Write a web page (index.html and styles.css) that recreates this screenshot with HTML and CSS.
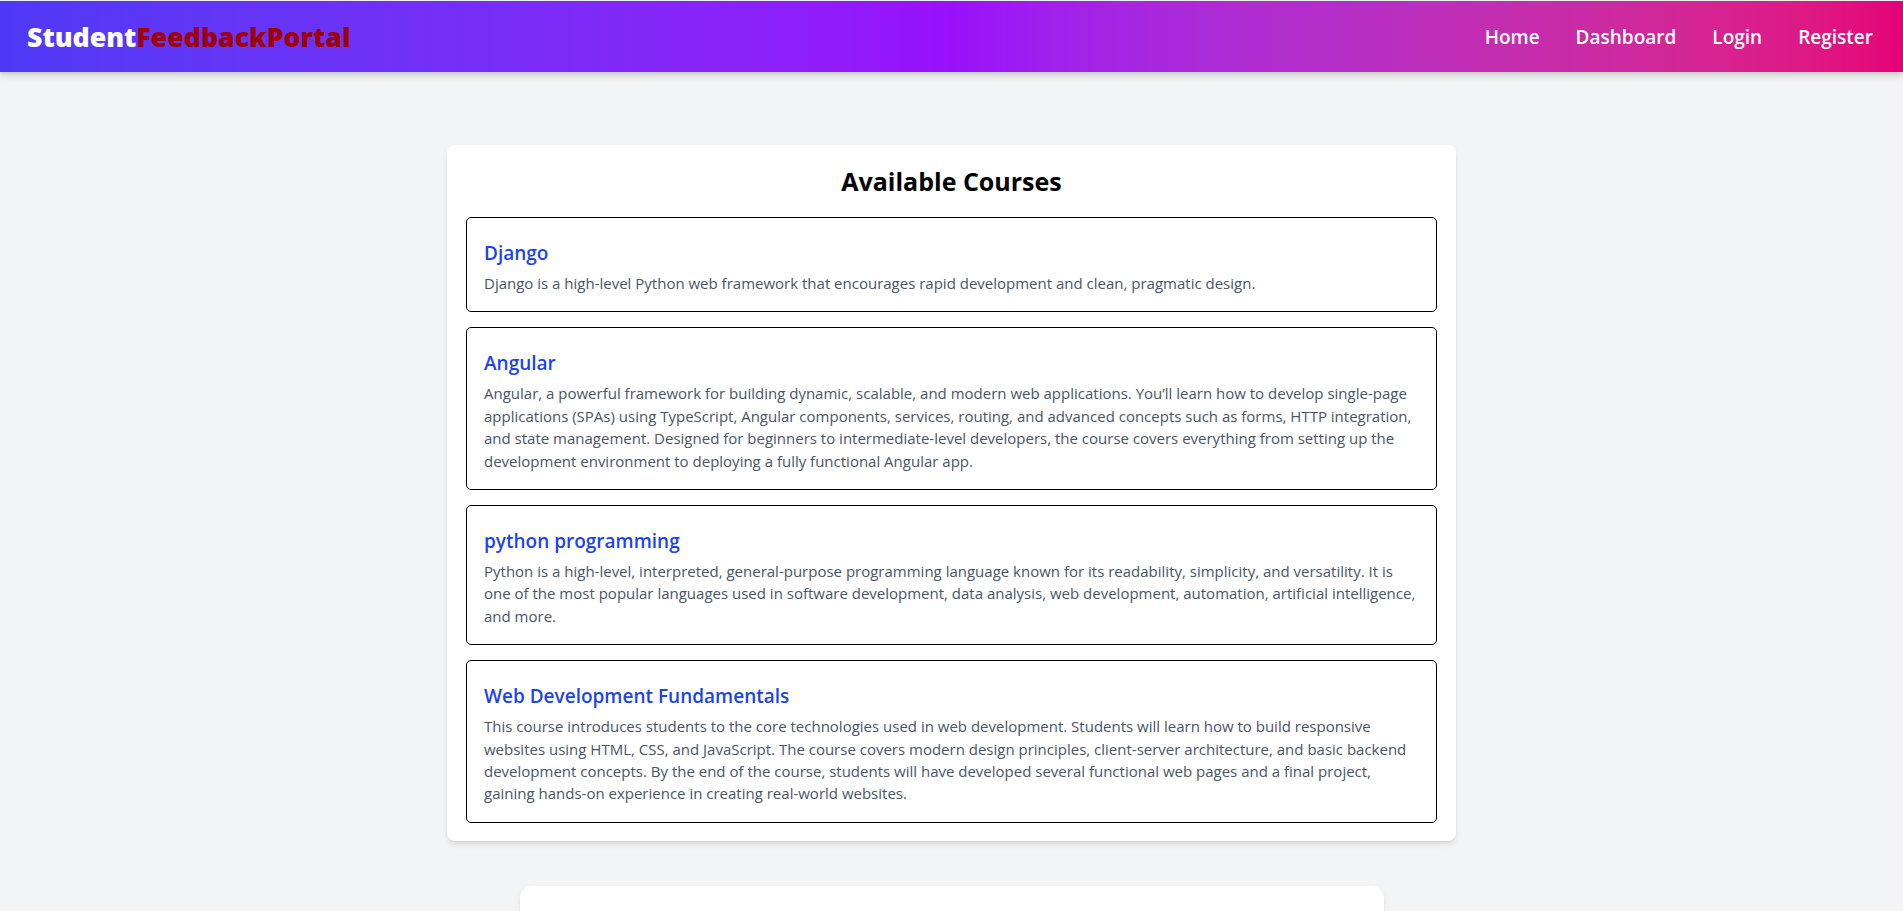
FILE: index.html
```html
<!DOCTYPE html>
<html lang="en">
<head>
<meta charset="utf-8">
<title>Student Feedback Portal</title>
<link rel="stylesheet" href="styles.css">
</head>
<body>
<header class="navbar">
  <div class="brand"><span class="brand-a">Student</span><span class="brand-b">FeedbackPortal</span></div>
  <nav class="nav-links">
    <a href="#" class="nav-link">Home</a>
    <a href="#" class="nav-link">Dashboard</a>
    <a href="#" class="nav-link">Login</a>
    <a href="#" class="nav-link">Register</a>
  </nav>
</header>
<main class="page">
  <section class="courses-card">
    <h2 class="courses-title">Available Courses</h2>
    <div class="course-list">
      <article class="course">
        <h3 class="course-name">Django</h3>
        <p class="course-desc">Django is a high-level Python web framework that encourages rapid development and clean, pragmatic design.</p>
      </article>
      <article class="course">
        <h3 class="course-name">Angular</h3>
        <p class="course-desc">Angular, a powerful framework for building dynamic, scalable, and modern web applications. You’ll learn how to develop single-page applications (SPAs) using TypeScript, Angular components, services, routing, and advanced concepts such as forms, HTTP integration, and state management. Designed for beginners to intermediate-level developers, the course covers everything from setting up the development environment to deploying a fully functional Angular app.</p>
      </article>
      <article class="course">
        <h3 class="course-name">python programming</h3>
        <p class="course-desc">Python is a high-level, interpreted, general-purpose programming language known for its readability, simplicity, and versatility. It is one of the most popular languages used in software development, data analysis, web development, automation, artificial intelligence, and more.</p>
      </article>
      <article class="course">
        <h3 class="course-name">Web Development Fundamentals</h3>
        <p class="course-desc">This course introduces students to the core technologies used in web development. Students will learn how to build responsive websites using HTML, CSS, and JavaScript. The course covers modern design principles, client-server architecture, and basic backend development concepts. By the end of the course, students will have developed several functional web pages and a final project, gaining hands-on experience in creating real-world websites.</p>
      </article>
    </div>
  </section>
  <section class="feedback-card"></section>
</main>
</body>
</html>
```
FILE: styles.css
```css
html {
  scrollbar-width: none;
}
html::-webkit-scrollbar {
  display: none;
}
body {
  margin: 0;
  background: #f3f4f6;
  font-family: "Open Sans", "Noto Sans", sans-serif;
  color: #111;
}
.navbar {
  height: 71px;
  margin-top: 1px;
  display: flex;
  align-items: center;
  justify-content: space-between;
  padding: 0 30px 0 27px;
  background: linear-gradient(in oklab to right, #4f39f6, #9810fa 50%, #e60076);
  box-shadow: 0 4px 8px rgba(0, 0, 0, 0.12), 0 2px 4px rgba(0, 0, 0, 0.08);
  position: relative;
  z-index: 1;
}
.brand {
  font-size: 26.7px;
  font-weight: 800;
}
.brand-a {
  color: #ffffff;
}
.brand-b {
  color: #a00008;
}
.nav-links {
  display: flex;
  gap: 36px;
}
.nav-link {
  color: #ffffff;
  text-decoration: none;
  font-size: 19px;
  font-weight: 600;
}
.page {
  padding-top: 73px;
  display: flex;
  flex-direction: column;
  align-items: center;
}
.courses-card {
  width: 1009px;
  box-sizing: border-box;
  background: #ffffff;
  border-radius: 8px;
  padding: 20px 19px 18.5px;
  box-shadow: 0 4px 6px -1px rgba(0, 0, 0, 0.1), 0 2px 4px -2px rgba(0, 0, 0, 0.1);
}
.courses-title {
  margin: 0 0 20px;
  text-align: center;
  font-size: 25px;
  line-height: 32px;
  font-weight: 700;
  color: #000;
}
.course-list {
  display: flex;
  flex-direction: column;
  gap: 15px;
}
.course {
  border: 1px solid #000;
  border-radius: 5px;
  padding: 21px 16px 17px 17px;
}
.course-name {
  margin: 0 0 5px;
  font-size: 19px;
  line-height: 28px;
  font-weight: 600;
  color: #1c44e8;
}
.course-desc {
  margin: 0;
  font-size: 15px;
  line-height: 22.4px;
  color: #4a5565;
}
.feedback-card {
  width: 864px;
  height: 320px;
  margin-top: 45px;
  margin-bottom: 40px;
  background: #ffffff;
  border-radius: 12px;
  box-shadow: 0 4px 6px -1px rgba(0, 0, 0, 0.1), 0 2px 4px -2px rgba(0, 0, 0, 0.1);
}
```
